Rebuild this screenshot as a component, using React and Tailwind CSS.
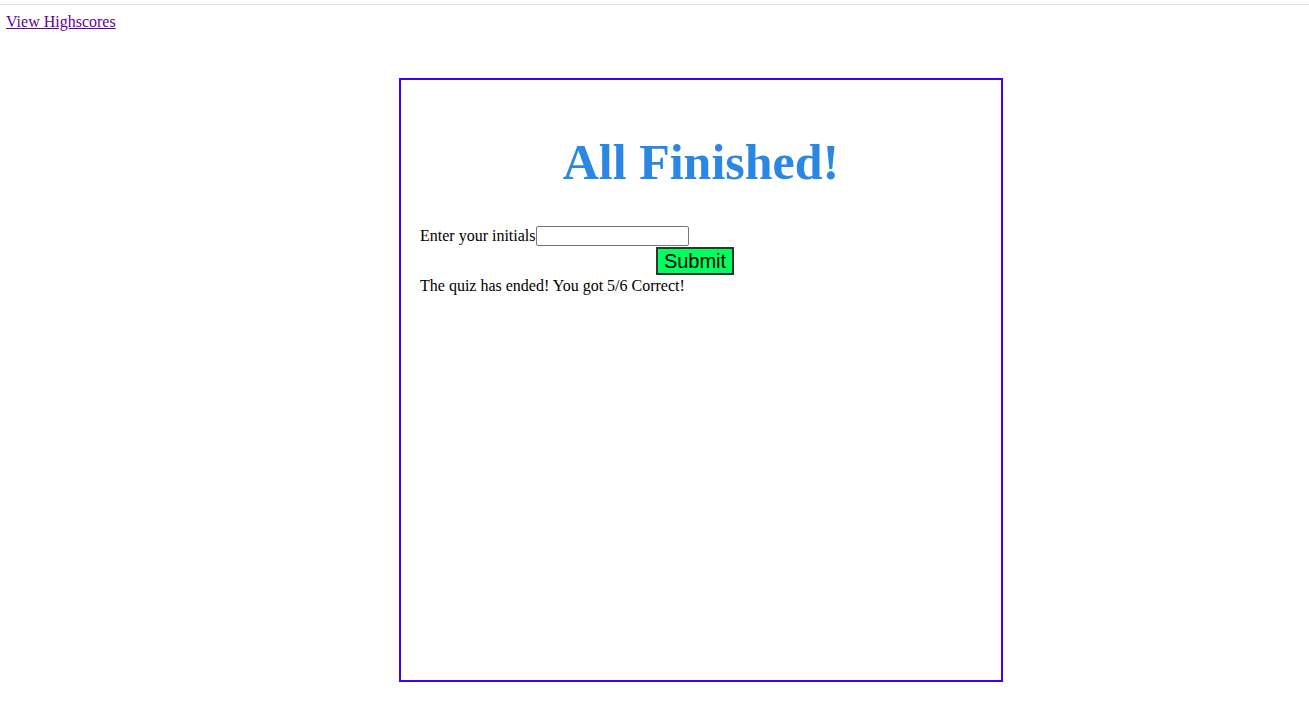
export default function App() {
  return (
    <div className="min-h-[721px] bg-white text-black text-[16px]" style={{ fontFamily: '"Liberation Serif", "Times New Roman", serif' }}>
      {/* top rule */}
      <div className="pt-[4px]">
        <div className="border-t border-[#dddddd]" />
      </div>

      {/* header link */}
      <div className="px-[6px] pt-[8px] leading-[18px]">
        <a href="#" className="text-[#660099] underline">View Highscores</a>
      </div>

      {/* quiz card */}
      <div className="ml-[399px] mt-[47px] w-[604px] h-[604px] border-2 border-[#4400ff] pl-[19px] pr-[19px] pt-[20px]">
        <h1 className="mt-[35px] text-center text-[50px] leading-[55px] font-bold text-[#2a88e2]">
          All Finished!
        </h1>

        <div className="mt-[36px] flex items-end leading-[18px]">
          <span className="pb-[1px]">Enter your initials</span>
          <input
            type="text"
            className="w-[153px] h-[20px] border border-[#767676] rounded-[2px] bg-white px-[2px] text-[13px]"
          />
        </div>

        <button
          className="ml-[236px] mt-[1px] block w-[78px] h-[28px] bg-[#00ff5e] border-2 border-[#333333] text-[20px] leading-[24px] text-black"
          style={{ fontFamily: '"Liberation Sans", Arial, sans-serif' }}
        >
          Submit
        </button>

        <p className="mt-[2px] leading-[18px]">The quiz has ended! You got 5/6 Correct!</p>
      </div>
    </div>
  );
}
